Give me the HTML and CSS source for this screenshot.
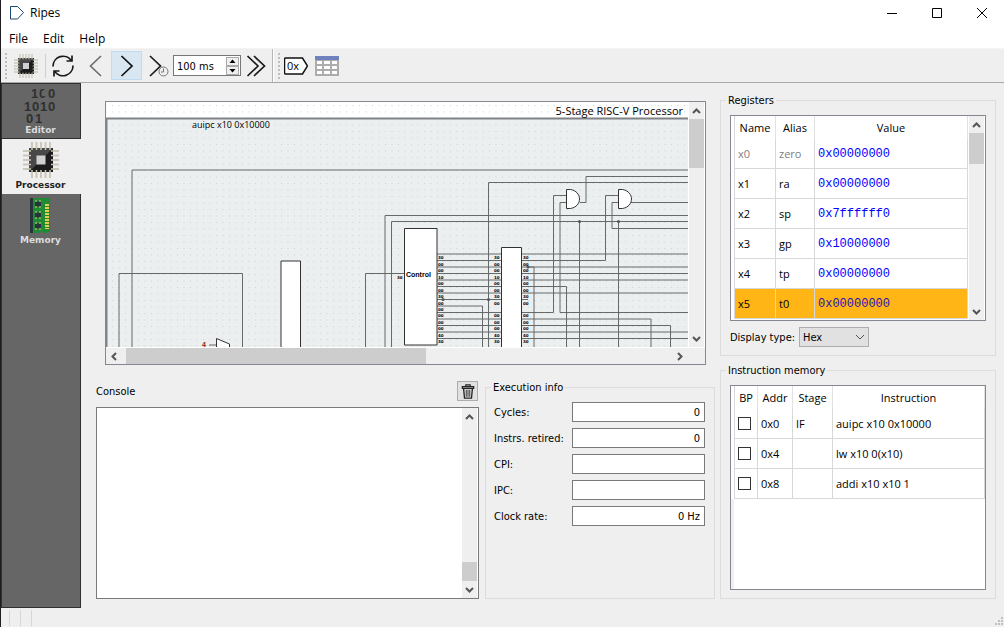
FILE: index.html
```html
<!DOCTYPE html>
<html lang="en">
<head>
<meta charset="utf-8">
<title>Ripes</title>
<link rel="stylesheet" href="styles.css">
</head>
<body>
<svg class="defs" aria-hidden="true">
  <defs>
    <symbol id="chip" viewBox="0 0 36 36">
      <path d="M9 0v36M13.500 0v36M18 0v36M22.500 0v36M27 0v36M0 9h36M0 13.500h36M0 18h36M0 22.500h36M0 27h36" stroke="#cbc8ba" stroke-width="2" fill="none"/>
      <rect x="6" y="6" width="24" height="24" fill="#1c1c1c"/>
      <path d="M6 6h24L6 30z" fill="#484848"/>
      <path d="M9 6v2M13.500 6v2M18 6v2M22.500 6v2M27 6v2M9 28v2M13.500 28v2M18 28v2M22.500 28v2M27 28v2M6 9h2M6 13.500h2M6 18h2M6 22.500h2M6 27h2M28 9h2M28 13.500h2M28 18h2M28 22.500h2M28 27h2" stroke="#cbc8ba" stroke-width="1.500"/>
      <rect x="13.500" y="13.500" width="9" height="9" fill="#d0d0d0"/>
    </symbol>
    <symbol id="up" viewBox="0 0 15 17"><path d="M4 11l3.500-3.500 3.500 3.500" fill="none" stroke="#555" stroke-width="2"/></symbol>
    <symbol id="down" viewBox="0 0 15 17"><path d="M4 7l3.500 3.500 3.500-3.500" fill="none" stroke="#555" stroke-width="2"/></symbol>
    <symbol id="left" viewBox="0 0 17 15"><path d="M10 4l-3.500 3.500 3.500 3.500" fill="none" stroke="#555" stroke-width="2"/></symbol>
    <symbol id="right" viewBox="0 0 17 15"><path d="M7 4l3.500 3.500-3.500 3.500" fill="none" stroke="#555" stroke-width="2"/></symbol>
  </defs>
</svg>
<div class="window">
  <header class="titlebar">
    <svg class="app-icon" viewBox="0 0 16 16"><path d="M1.500 1.500h7l6 6-6 6.500h-7z" fill="#fff" stroke="#1c4873"/></svg>
    <span class="app-name">Ripes</span>
    <button class="win-btn" aria-label="Minimize"><svg viewBox="0 0 12 12"><path d="M1 6.500h10" stroke="#000"/></svg></button>
    <button class="win-btn" aria-label="Maximize"><svg viewBox="0 0 12 12"><path d="M1.500 1.500h9v9h-9z" fill="none" stroke="#000"/></svg></button>
    <button class="win-btn" aria-label="Close"><svg viewBox="0 0 12 12"><path d="M1 1l10 10M11 1L1 11" stroke="#000"/></svg></button>
  </header>
  <nav class="menubar">
    <button>File</button><button>Edit</button><button>Help</button>
  </nav>
  <div class="toolbar">
    <span class="handle"></span>
    <button class="tool chip-tool" aria-label="Select processor"><svg viewBox="0 0 24 24"><use href="#chip"/></svg></button>
    <span class="tool-sep"></span>
    <button class="tool reset-tool" aria-label="Reset"><svg viewBox="0 0 24 24" fill="none" stroke="#1a1a1a" stroke-width="1.700"><path d="M2 12.500A10 10 0 0 1 20.500 7M22 11.500A10 10 0 0 1 3.500 17M21 1.500V7h-5.500M3 22.500V17h5.500"/></svg></button>
    <button class="tool" aria-label="Step back"><svg viewBox="0 0 24 24" fill="none" stroke="#6c6c6c" stroke-width="1.600"><path d="M17 2L6.500 12 17 22"/></svg></button>
    <button class="tool active" aria-label="Step"><svg viewBox="0 0 24 24" fill="none" stroke="#111" stroke-width="1.700"><path d="M6.500 2L17 12 6.500 22"/></svg></button>
    <button class="tool" aria-label="Auto clock"><svg viewBox="0 0 24 24" fill="none" stroke="#1a1a1a" stroke-width="1.700"><path d="M4 2l10.500 10L4 22"/><circle cx="17.500" cy="17.500" r="4.500" fill="#efefef" stroke="#777" stroke-width="1"/><path d="M17.500 14.500v3.500H15" stroke="#777" stroke-width="1"/></svg></button>
    <div class="spinbox">
      <input type="text" value="100 ms" aria-label="Clock interval">
      <div class="spin-btns">
        <button aria-label="Increase"><svg viewBox="0 0 11 7"><path d="M2.500 5l3-3.500 3 3.500z"/></svg></button>
        <button aria-label="Decrease"><svg viewBox="0 0 11 7"><path d="M2.500 2l3 3.500 3-3.500z"/></svg></button>
      </div>
    </div>
    <button class="tool" aria-label="Run"><svg viewBox="0 0 24 24" fill="none" stroke="#1a1a1a" stroke-width="1.700"><path d="M2.500 2L13 12 2.500 22M9 2l10.500 10L9 22"/></svg></button>
    <span class="bar-split"></span>
    <span class="handle"></span>
    <button class="tool" aria-label="Hex labels"><svg viewBox="0 0 24 24"><path d="M1.500 4h17l5 8-5 8h-17q-1 0-1-1V5q0-1 1-1z" fill="#fff" stroke="#111" stroke-width="1.500"/><text x="3" y="16" class="hex-text">0x</text></svg></button>
    <button class="tool" aria-label="Pipeline table"><svg viewBox="0 0 24 24"><path d="M0 2h24v20H0z" fill="#acacac"/><path d="M0 2h24v4H0z" fill="#6f81bf"/><path d="M2 7h5v3H2zM9 7h6v3H9zM17 7h5v3h-5zM2 12h5v3H2zM9 12h6v3H9zM17 12h5v3h-5zM2 17h5v3H2zM9 17h6v3H9zM17 17h5v3h-5z" fill="#fff"/></svg></button>
  </div>
  <main class="main">
    <nav class="sidebar">
      <button class="tab"><svg viewBox="0 0 36 38"><g class="bits"><text x="8" y="12">1</text><text x="16" y="12">0</text><text x="25" y="12">0</text><text x="1" y="25">1</text><text x="9" y="25">0</text><text x="17" y="25">1</text><text x="25" y="25">0</text><text x="3" y="37">0</text><text x="12" y="37">1</text></g><path d="M20 4h4v6h-4z" fill="#666"/></svg><span>Editor</span></button>
      <button class="tab selected"><svg viewBox="0 0 36 38"><use href="#chip" y="1" width="36" height="36"/></svg><span>Processor</span></button>
      <button class="tab"><svg viewBox="0 0 36 38"><path d="M7 2h3v35H7z" fill="#27333d"/><path d="M10 2h17v34q-3-1-3 1h-4q0-3-3-1l-2 1h-5z" fill="#218a35"/><path d="M12.500 3.500v33M18 3.500v33" stroke="#e2d04c" stroke-width="0"/><path d="M12 5.500h6v5h-6zM12 16.500h6v5h-6zM12 27.500h6v5h-6z" fill="#27333d"/><path d="M12 5h6M12 11h6M12 16h6M12 22h6M12 27h6M12 33h6" stroke="#d9d27a" stroke-width="1" stroke-dasharray="2 2"/><path d="M24 8v25" stroke="#e2d04c" stroke-width="4" stroke-dasharray="2 1"/></svg><span>Memory</span></button>
    </nav>
    <div class="content">
      <div class="center">
        <section class="viewer">
          <div class="view-row">
            <svg class="diagram" viewBox="106 102 582 245" preserveAspectRatio="xMinYMin slice">
              <defs><pattern id="dots" x="112" y="105" width="6.500" height="6.500" patternUnits="userSpaceOnUse"><rect width="1" height="1" fill="#ccd1d3"/></pattern></defs>
              <rect x="106" y="102" width="582" height="245" fill="#fff"/>
              <rect x="106" y="118" width="582" height="229" fill="#ebeff0"/>
              <rect x="106" y="102" width="582" height="245" fill="url(#dots)"/>
              <path d="M106.500 347V118.500H688" class="frame-line"/>
              <g class="wires">
                <path d="M132 347V170H688M119 347V273.500H242.500V347M209 345h8"/>
                <path d="M365.500 347V273.500H404M385 347V215.500H688M391.500 347V221.500H688M488.500 347V182.500H688"/>
                <path d="M437 254h64M437 260.500h64M437 267h64M437 273.500h64M437 280h64M437 286.500h64M437 293h64M437 299.500h64M437 306h45.500v41M437 312.500h64M437 319h64M437 325.500h64M437 332h64M437 338.500h64"/>
                <path d="M522 254H688M522 260.500h83.500v-65h13M522 267h166M528 267h6v80M522 273.500h166M522 280h166M522 286.500h44.500v60.500M522 293h166M522 299.500h6M522 312.500h31.500v-117h13M688 312.500H560V202.500h7M522 319h129v28M522 325.500h148.500v21.500M522 332h166M522 338.500h166"/>
                <path d="M580 202.500h6V176.500h102M631 202.500h57M618 202.500h-6v26h76M579.500 221.500V347M618.500 221.500V347"/>
              </g>
              <g fill="#555"><circle cx="443" cy="299.500" r="1.500"/><circle cx="488.500" cy="299.500" r="1.500"/><circle cx="528" cy="267" r="1.500"/><circle cx="579.500" cy="221.500" r="1.500"/><circle cx="618.500" cy="221.500" r="1.500"/></g>
              <g class="parts">
                <path d="M281 350V261h19.500v89M404.500 228.500H437V345h-32.500zM501.500 350V247.500h20V350M216.500 350v-11.500l13 5.500v6"/>
                <path d="M566.500 189.500h4c12 2 12 17 0 19h-4zM618.500 189.500h4c12 2 12 17 0 19h-4z"/>
              </g>
              <text x="192" y="128" class="stage-name">auipc x10 0x10000</text>
              <text x="683" y="115" text-anchor="end" class="proc-name">5-Stage RISC-V Processor</text>
              <text x="406" y="277" class="control-name">Control</text>
              <text x="202" y="347" class="control-name const">4</text>
              <g class="pins">
                <text x="397" y="279">30</text>
                <text x="438" y="259">30</text><text x="438" y="266">00</text><text x="438" y="272">00</text><text x="438" y="279">10</text><text x="438" y="285">00</text><text x="438" y="292">00</text><text x="438" y="298">30</text><text x="438" y="305">00</text><text x="438" y="311">00</text><text x="438" y="317">00</text><text x="438" y="324">00</text><text x="438" y="330">00</text><text x="438" y="337">40</text><text x="438" y="343">30</text>
                <text x="494" y="259">30</text><text x="494" y="266">00</text><text x="494" y="272">00</text><text x="494" y="279">10</text><text x="494" y="285">00</text><text x="494" y="292">00</text><text x="494" y="298">30</text><text x="494" y="305">00</text><text x="494" y="317">00</text><text x="494" y="324">00</text><text x="494" y="330">00</text><text x="494" y="337">40</text><text x="494" y="343">30</text>
                <text x="523" y="259">30</text><text x="523" y="266">00</text><text x="523" y="272">00</text><text x="523" y="279">10</text><text x="523" y="285">00</text><text x="523" y="292">00</text><text x="523" y="298">30</text><text x="523" y="305">00</text><text x="523" y="317">00</text><text x="523" y="324">00</text><text x="523" y="330">00</text><text x="523" y="337">40</text><text x="523" y="343">30</text>
              </g>
            </svg>
            <div class="vscroll"><svg><use href="#up"/></svg><div class="track"><div class="thumb" style="height:23%"></div></div><svg><use href="#down"/></svg></div>
          </div>
          <div class="hscroll"><svg><use href="#left"/></svg><div class="track"><div class="thumb" style="width:55%"></div></div><svg><use href="#right"/></svg></div>
        </section>
        <div class="lower">
          <section class="console">
            <div class="console-head">
              <label for="console">Console</label>
              <button class="trash" aria-label="Clear console"><svg viewBox="0 0 16 18" fill="none" stroke="#222"><path d="M1.500 3.500h13v2h-13zM5.500 3V1.500h5V3" stroke-width="1.400"/><path d="M3 6l1 10.500h8L13 6" stroke-width="1.500"/><path d="M6 7v8M8 7v8M10 7v8"/></svg></button>
            </div>
            <div class="console-box">
              <textarea id="console"></textarea>
              <div class="vscroll"><svg><use href="#up"/></svg><div class="track end"><div class="thumb" style="height:12%"></div></div><svg><use href="#down"/></svg></div>
            </div>
          </section>
          <fieldset class="group exec">
            <legend>Execution info</legend>
            <div class="fields">
              <label for="cycles">Cycles:</label><input id="cycles" value="0" readonly>
              <label for="retired">Instrs. retired:</label><input id="retired" value="0" readonly>
              <label for="cpi">CPI:</label><input id="cpi" readonly>
              <label for="ipc">IPC:</label><input id="ipc" readonly>
              <label for="rate">Clock rate:</label><input id="rate" value="0 Hz" readonly>
            </div>
          </fieldset>
        </div>
      </div>
      <div class="side">
        <fieldset class="group">
          <legend>Registers</legend>
          <div class="table-box">
            <div class="table-view">
              <table class="regs">
                <colgroup><col class="c-name"><col class="c-alias"><col></colgroup>
                <thead><tr><th>Name</th><th>Alias</th><th>Value</th></tr></thead>
                <tbody>
                  <tr class="muted"><td>x0</td><td>zero</td><td class="val">0x00000000</td></tr>
                  <tr><td>x1</td><td>ra</td><td class="val">0x00000000</td></tr>
                  <tr><td>x2</td><td>sp</td><td class="val">0x7ffffff0</td></tr>
                  <tr><td>x3</td><td>gp</td><td class="val">0x10000000</td></tr>
                  <tr><td>x4</td><td>tp</td><td class="val">0x00000000</td></tr>
                  <tr class="changed"><td>x5</td><td>t0</td><td class="val">0x00000000</td></tr>
                </tbody>
              </table>
            </div>
            <div class="vscroll"><svg><use href="#up"/></svg><div class="track"><div class="thumb" style="height:18%"></div></div><svg><use href="#down"/></svg></div>
          </div>
          <div class="display">
            <label for="display-type">Display type:</label>
            <span class="select-wrap"><select id="display-type"><option>Hex</option></select><svg viewBox="0 0 10 6"><path d="M1 1l4 4 4-4" fill="none" stroke="#555"/></svg></span>
          </div>
        </fieldset>
        <fieldset class="group instr">
          <legend>Instruction memory</legend>
          <div class="table-box">
            <div class="table-view">
              <table>
                <colgroup><col class="c-bp"><col class="c-addr"><col class="c-stage"><col></colgroup>
                <thead><tr><th>BP</th><th>Addr</th><th>Stage</th><th>Instruction</th></tr></thead>
                <tbody>
                  <tr><td><input type="checkbox" aria-label="Breakpoint at 0x0"></td><td>0x0</td><td>IF</td><td>auipc x10 0x10000</td></tr>
                  <tr><td><input type="checkbox" aria-label="Breakpoint at 0x4"></td><td>0x4</td><td></td><td>lw x10 0(x10)</td></tr>
                  <tr><td><input type="checkbox" aria-label="Breakpoint at 0x8"></td><td>0x8</td><td></td><td>addi x10 x10 1</td></tr>
                </tbody>
              </table>
            </div>
          </div>
        </fieldset>
      </div>
    </div>
  </main>
  <footer class="statusbar">
    <span></span><span></span><span></span>
    <svg viewBox="0 0 10 10"><path d="M7 1h2v2H7zM4 4h2v2H4zM7 4h2v2H7zM1 7h2v2H1zM4 7h2v2H4zM7 7h2v2H7z" fill="#bfbfbf"/></svg>
  </footer>
</div>
</body>
</html>
```
FILE: styles.css
```css
* { box-sizing: border-box; }
body { margin: 0; font: 11px/14px "DejaVu Sans Condensed", "Noto Sans", sans-serif; color: #000; background: #efefef; }
button, input, select, textarea { font: inherit; color: inherit; margin: 0; border-radius: 0; }
button { padding: 0; border: 0; background: none; }
svg { display: block; }
.defs { position: absolute; width: 0; height: 0; }
.window { display: flex; flex-direction: column; height: 100vh; border-left: 1px solid #1f1c22; }

.titlebar { display: flex; align-items: center; height: 26px; background: #fff; padding-left: 8px; font: 12px/16px "Open Sans", sans-serif; }
.app-icon { width: 16px; height: 16px; }
.app-name { flex: 1; padding-left: 5px; }
.win-btn { display: grid; place-items: center; width: 45px; height: 26px; }
.win-btn svg { width: 12px; height: 12px; }

.menubar { display: flex; gap: 15px; height: 23px; padding: 1px 0 0 8px; background: #fff; font: 12px/24px "Open Sans", sans-serif; border-bottom: 1px solid #f4f4f4; }

.toolbar { display: flex; align-items: center; height: 34px; padding-left: 4px; border-bottom: 1px solid #a8a8a8; }
.handle { width: 2px; height: 26px; background: repeating-linear-gradient(#bdbdbd 0 2px, transparent 2px 4px); }
.tool { display: grid; place-items: center; width: 31px; height: 29px; }
.tool svg { width: 24px; height: 24px; }
.tool.active { background: #d9e7f2; border: 1px solid #bfdcf2; }
.chip-tool { width: 38px; }
.reset-tool { width: 34px; }
.tool-sep { width: 1px; height: 24px; background: #cfcfcf; }
.hex-text { font: 11px "Open Sans", sans-serif; }
.spinbox { display: flex; width: 68px; height: 21px; border: 1px solid #777; background: #fff; }
.spinbox input { flex: 1; min-width: 0; border: 0; padding: 2px 3px 0; }
.spin-btns { display: flex; flex-direction: column; width: 15px; padding: 1px; }
.spin-btns button { flex: 1; display: grid; place-items: center; background: #efefef; border: 1px solid #aaa; }
.spin-btns svg { width: 11px; height: 7px; }
.bar-split { width: 2px; height: 33px; margin-right: 4px; background: linear-gradient(90deg, #b5b5b5 50%, #fff 50%); }

.main { flex: 1; display: flex; min-height: 0; }
.sidebar { width: 80px; flex: none; background: #666 linear-gradient(#303030, #303030) right / 1px 100% no-repeat; border: 1px solid #303030; border-width: 1px 0 1px 1px; }
.tab { display: flex; flex-direction: column; align-items: center; width: 100%; height: 55px; padding: 2px 2px 0 0; color: #dcdcdc; font: bold 9px/12px "DejaVu Sans", sans-serif; }
.tab:first-child { border-bottom: 1px solid #303030; }
.tab svg { width: 36px; height: 38px; }
.tab.selected { background: #efefef; color: #222; }
.bits { font: bold 13px "Liberation Sans", sans-serif; fill: #303030; }

.content { flex: 1; display: flex; gap: 5px; min-width: 0; padding: 9px 8px 9px 15px; }
.center { flex: 1; min-width: 0; display: grid; grid-template-rows: minmax(0, 273fr) minmax(0, 220fr); gap: 14px; }
.viewer { display: flex; flex-direction: column; min-height: 0; margin: 9px 9px 0; border: 1px solid #828790; }
.view-row { flex: 1; display: flex; min-height: 0; background: #fff; }
.diagram { flex: 1; min-width: 0; height: 100%; }
.vscroll { width: 17px; flex: none; display: flex; flex-direction: column; background: #efefef; border: solid #fff; border-width: 0 1px; }
.vscroll > svg { width: 15px; height: 17px; }
.hscroll { height: 17px; flex: none; display: flex; align-items: center; padding-right: 17px; background: #efefef; border-top: 1px solid #fff; }
.hscroll > svg { width: 17px; height: 15px; }
.track { flex: 1; display: flex; }
.vscroll .track { flex-direction: column; }
.hscroll .track { align-self: stretch; padding-left: 3px; }
.track.end { justify-content: flex-end; }
.thumb { background: #cdcdcd; }

.frame-line { fill: none; stroke: #808285; stroke-width: 2; }
.wires { fill: none; stroke: #666a6b; stroke-width: 1; }
.parts { fill: #fff; stroke: #333; stroke-width: 1; }
.stage-name { font: 9px "Open Sans", sans-serif; }
.proc-name { font: 11px "Open Sans", sans-serif; }
.control-name { font: bold 7px "Liberation Sans", sans-serif; }
.const { fill: #822; }
.pins { font: bold 4px "DejaVu Sans", sans-serif; }

.lower { display: flex; gap: 6px; min-height: 0; }
.console { flex: 1; min-width: 0; display: flex; flex-direction: column; }
.console-head { display: flex; justify-content: space-between; align-items: flex-end; height: 22px; margin-bottom: 6px; padding-right: 1px; }
.console-head label { padding-bottom: 2px; }
.trash { display: grid; place-items: center; width: 21px; height: 20px; background: #e1e1e1; border: 1px solid #adadad; }
.trash svg { width: 14px; height: 17px; }
.console-box { flex: 1; display: flex; min-height: 0; border: 1px solid #7a7a7a; background: #fff; }
.console-box textarea { flex: 1; border: 0; resize: none; background: #fff; }

.group { min-width: 0; min-height: 0; margin: 0; border: 1px solid #dcdcdc; padding: 7px 9px 8px; display: flex; flex-direction: column; }
.group legend { margin-left: -4px; padding: 2px 2px 0; line-height: 14px; }
.exec { width: 230px; flex: none; }
.exec legend { margin-left: -3px; }
.exec.group { padding-left: 8px; }
.fields { display: grid; grid-template-columns: 78px 1fr; gap: 6px 0; align-items: center; }
.fields label { padding-top: 2px; }
.fields input { min-width: 0; width: 100%; height: 20px; padding: 1px 4px 0; border: 1px solid #7a7a7a; background: #fff; text-align: right; }

.side { width: 276px; flex: none; display: grid; grid-template-rows: minmax(0, 264fr) minmax(0, 237fr); gap: 6px; }
.table-box { flex: 1; min-height: 0; display: flex; border: 1px solid #828790; background: #fff; }
.table-view { flex: 1; min-width: 0; padding-left: 3px; overflow: hidden; }
.instr .table-view { background: linear-gradient(#f0f0f0, #f0f0f0) 0 113px / 3px 100% no-repeat; }
table { width: 100%; table-layout: fixed; border-spacing: 0; border-left: 1px solid #d8d8d8; font: 11px/16px "Open Sans", sans-serif; }
th { height: 23px; padding: 0; font-weight: 400; border-right: 1px solid #e2e2e2; }
td { height: 30px; padding: 0 3px; border: 1px solid #d8d8d8; border-width: 0 1px 1px 0; }
.c-name { width: 41px; }
.c-alias { width: 39px; }
.c-bp { width: 23px; }
.c-addr { width: 35px; }
.c-stage { width: 40px; }
.val { font: 12px/16px "Liberation Mono", monospace; color: #00f; }
.muted { color: #808080; }
.changed td { background: #ffb515; }
.changed .val { color: #2a12b8; }
td input[type="checkbox"] { display: block; appearance: none; width: 13px; height: 13px; border: 1px solid #333; background: #fff; }
.display { display: flex; align-items: center; gap: 6px; padding-top: 6px; }
.display label { width: 63px; padding-top: 2px; white-space: nowrap; }
.select-wrap { position: relative; width: 70px; }
.select-wrap select { appearance: none; display: block; width: 100%; height: 20px; padding: 1px 3px 0; border: 1px solid #adadad; background: #e1e1e1; }
.select-wrap svg { position: absolute; right: 4px; top: 7px; width: 10px; height: 6px; pointer-events: none; }

.statusbar { display: flex; height: 19px; padding: 2px 0 1px 8px; gap: 10px; }
.statusbar span { width: 1px; background: #d7d7d7; }
.statusbar svg { width: 10px; height: 10px; margin-left: auto; align-self: flex-end; }
```
